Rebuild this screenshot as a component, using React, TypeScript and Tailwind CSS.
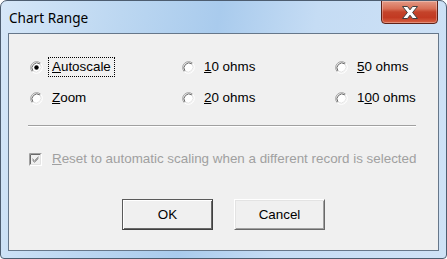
import type { ReactNode } from "react";

function Radio({ checked }: { checked?: boolean }) {
    return (
        <svg width="13" height="13" viewBox="0 0 13 13" className="shrink-0">
            <circle cx="6.5" cy="6.5" r="5" fill="#ffffff" />
            <path d="M2.26 10.74 A6 6 0 0 1 10.74 2.26" fill="none" stroke="#a0a0a0" strokeWidth="1" />
            <path d="M3 10 A5 5 0 0 1 10 3" fill="none" stroke="#696969" strokeWidth="1" />
            <path d="M10.74 2.26 A6 6 0 0 1 2.26 10.74" fill="none" stroke="#ffffff" strokeWidth="1" />
            <path d="M10 3 A5 5 0 0 1 3 10" fill="none" stroke="#e3e3e3" strokeWidth="1" />
            {checked && <circle cx="6.5" cy="6.5" r="2.2" fill="#000000" />}
        </svg>
    );
}

function Option({ checked, focused, children }: { checked?: boolean; focused?: boolean; children: ReactNode }) {
    return (
        <div className="flex items-center h-[20px]">
            <Radio checked={checked} />
            <span
                className={
                    focused
                        ? "ml-[5px] h-[20px] flex items-center px-[3px] border border-dotted border-black"
                        : "ml-[5px] h-[20px] flex items-center px-[3px] border border-transparent"
                }
            >
                {children}
            </span>
        </div>
    );
}

export default function App() {
    return (
        <div
            className="w-[447px] h-[259px] flex flex-col border border-[#4d5d70] rounded-t-[7px] rounded-b-[4px] overflow-hidden bg-[linear-gradient(100deg,#d6e7f8_0%,#bcd7f1_25%,#a9cbed_45%,#c5dcf4_65%,#cfe2f6_100%)]"
            style={{ fontFamily: '"Liberation Sans", Arial, sans-serif' }}
        >
            <div className="h-[32px] shrink-0 flex items-start justify-between">
                <div
                    className="pl-[8px] pt-[8px] text-[13.6px] leading-[18px] text-black"
                    style={{ fontFamily: '"Noto Sans", "Open Sans", sans-serif' }}
                >
                    Chart Range
                </div>
                <div className="mr-[8px] -mt-px w-[57px] h-[24px] rounded-b-[4px] border border-[#5e2218] bg-[linear-gradient(180deg,#e49a86_0%,#d86f56_35%,#c4432a_50%,#c23a22_75%,#d86244_100%)] flex items-center justify-center shadow-[inset_0_0_0_1px_rgba(255,255,255,0.3)]">
                    <svg width="20" height="15" viewBox="0 0 20 15">
                        <path
                            d="M2.5 1.5 L7.5 1.5 L10 4.8 L12.5 1.5 L17.5 1.5 L12.6 7.5 L17.5 13.5 L12.5 13.5 L10 10.2 L7.5 13.5 L2.5 13.5 L7.4 7.5 Z"
                            fill="#ffffff"
                            stroke="#3f3f3f"
                            strokeWidth="1"
                            strokeLinejoin="round"
                        />
                    </svg>
                </div>
            </div>
            <div className="flex-1 mx-[7px] mb-[7px] border border-[#66778a] bg-[#f0f0f0] text-[13.4px] text-black">
                <div className="grid grid-cols-[152px_153px_1fr] gap-y-[11px] pl-[21px] pt-[23px]">
                    <Option checked focused>
                        <span><u>A</u>utoscale</span>
                    </Option>
                    <Option>
                        <span><u>1</u>0 ohms</span>
                    </Option>
                    <Option>
                        <span><u>5</u>0 ohms</span>
                    </Option>
                    <Option>
                        <span><u>Z</u>oom</span>
                    </Option>
                    <Option>
                        <span><u>2</u>0 ohms</span>
                    </Option>
                    <Option>
                        <span>1<u>0</u>0 ohms</span>
                    </Option>
                </div>
                <div className="ml-[19px] mr-[22px] mt-[17px] h-[2px] border-t border-[#a0a0a0] border-b border-b-white" />
                <div className="flex items-center ml-[20px] mt-[22px] text-[#a0a0a0]">
                    <svg width="13" height="13" viewBox="0 0 13 13" className="shrink-0">
                        <rect x="0" y="0" width="13" height="13" fill="#ffffff" />
                        <path d="M0.5 12.5 V0.5 H12.5" fill="none" stroke="#a0a0a0" />
                        <path d="M1.5 11.5 V1.5 H11.5" fill="none" stroke="#696969" />
                        <path d="M1.5 11.5 H11.5 V1.5" fill="none" stroke="#e3e3e3" />
                        <rect x="2" y="2" width="9" height="9" fill="#f0f0f0" />
                        <path d="M3.5 5.5 L5.5 7.5 L9.5 3.5 M3.5 6.5 L5.5 8.5 L9.5 4.5 M3.5 7.5 L5.5 9.5 L9.5 5.5" fill="none" stroke="#a0a0a0" strokeWidth="1" />
                    </svg>
                    <span className="ml-[10px]"><u>R</u>eset to automatic scaling when a different record is selected</span>
                </div>
                <div className="flex justify-center gap-[21px] mt-[30px]">
                    <button className="w-[91px] h-[31px] border border-[#5a5a5a] border-r-[#404040] border-b-[#404040] shadow-[inset_1px_1px_0_#ffffff,inset_-1px_-1px_0_#696969] bg-[#f0f0f0] text-[13.4px] text-black">
                        OK
                    </button>
                    <button className="w-[91px] h-[31px] border border-white border-r-[#696969] border-b-[#696969] shadow-[inset_1px_1px_0_#e3e3e3,inset_-1px_-1px_0_#a0a0a0] bg-[#f0f0f0] text-[13.4px] text-black">
                        Cancel
                    </button>
                </div>
            </div>
        </div>
    );
}
